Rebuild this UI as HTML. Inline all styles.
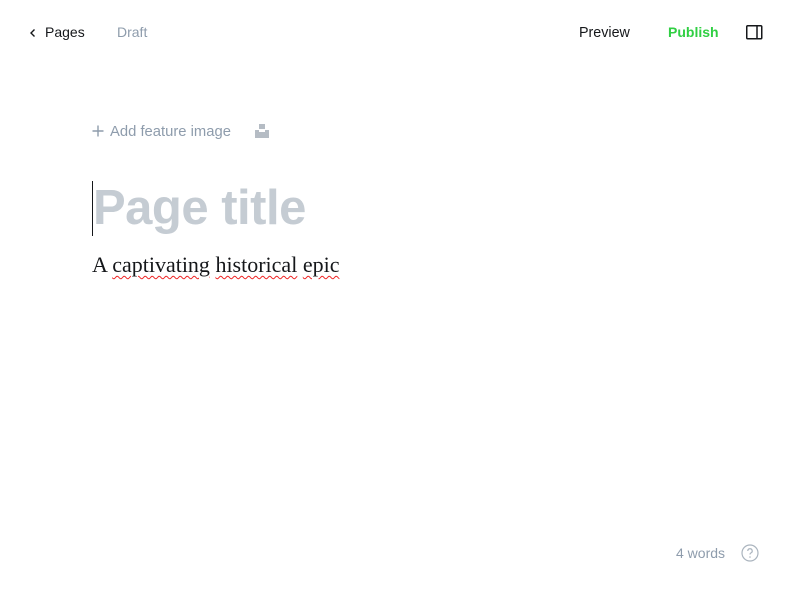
<!DOCTYPE html>
<html><head><style>
body{margin:0;width:800px;height:600px;background:#fff;font-family:"Liberation Sans",sans-serif;position:relative;overflow:hidden}
.a{position:absolute;white-space:nowrap}
.w{text-decoration:underline wavy #e22;text-underline-offset:3px;text-decoration-thickness:1px}
</style></head><body>
<svg class="a" style="left:29px;top:28px" width="8" height="10" viewBox="0 0 8 10"><path d="M5.5 1.5 L2 5 L5.5 8.5" fill="none" stroke="#15171a" stroke-width="1.4"/></svg>
<div class="a" style="left:45px;top:24px;font-size:14px;color:#15171a">Pages</div>
<div class="a" style="left:117px;top:24px;font-size:14px;color:#8e9cac">Draft</div>
<div class="a" style="left:579px;top:25px;font-size:14.3px;color:#15171a">Preview</div>
<div class="a" style="left:668px;top:24px;font-size:14px;color:#30cf43;font-weight:bold">Publish</div>
<svg class="a" style="left:746px;top:25px" width="17" height="15" viewBox="0 0 17 15"><rect x="0.75" y="0.75" width="15" height="13" rx="1" fill="none" stroke="#15171a" stroke-width="1.5"/><line x1="11" y1="1" x2="11" y2="14" stroke="#15171a" stroke-width="1.5"/></svg>
<svg class="a" style="left:92px;top:125px" width="12" height="12" viewBox="0 0 12 12"><path d="M6 0.5V11.5M0.5 6H11.5" stroke="#8e9cac" stroke-width="1.4"/></svg>
<div class="a" style="left:110px;top:124px;font-size:14.8px;color:#8e9cac">Add feature image</div>
<svg class="a" style="left:255px;top:124px" width="14" height="14" viewBox="0 0 14 14"><rect x="4" y="0" width="6" height="5" fill="#b5bcc4"/><path d="M0 6H4V8H10V6H14V14H0Z" fill="#b5bcc4"/></svg>
<div class="a" style="left:92px;top:181px;width:1px;height:55px;background:#15171a"></div>
<div class="a" style="left:93px;top:180px;font-size:49px;font-weight:bold;color:#c5ccd3;letter-spacing:-0.5px">Page title</div>
<div class="a" style="left:92px;top:252px;font-size:22px;font-family:'Liberation Serif',serif;color:#15171a">A <span class="w">captivating</span> <span class="w">historical</span> <span class="w">epic</span></div>
<div class="a" style="left:676px;top:545px;font-size:14px;color:#8e9cac">4 words</div>
<svg class="a" style="left:741px;top:544px" width="18" height="18" viewBox="0 0 18 18"><circle cx="9" cy="9" r="8" fill="none" stroke="#aab4be" stroke-width="1.2"/><path d="M6.8 7a2.2 2.2 0 1 1 3 2c-.6.3-.8.7-.8 1.5" fill="none" stroke="#aab4be" stroke-width="1.2"/><circle cx="9" cy="13" r=".8" fill="#aab4be"/></svg>
</body></html>
